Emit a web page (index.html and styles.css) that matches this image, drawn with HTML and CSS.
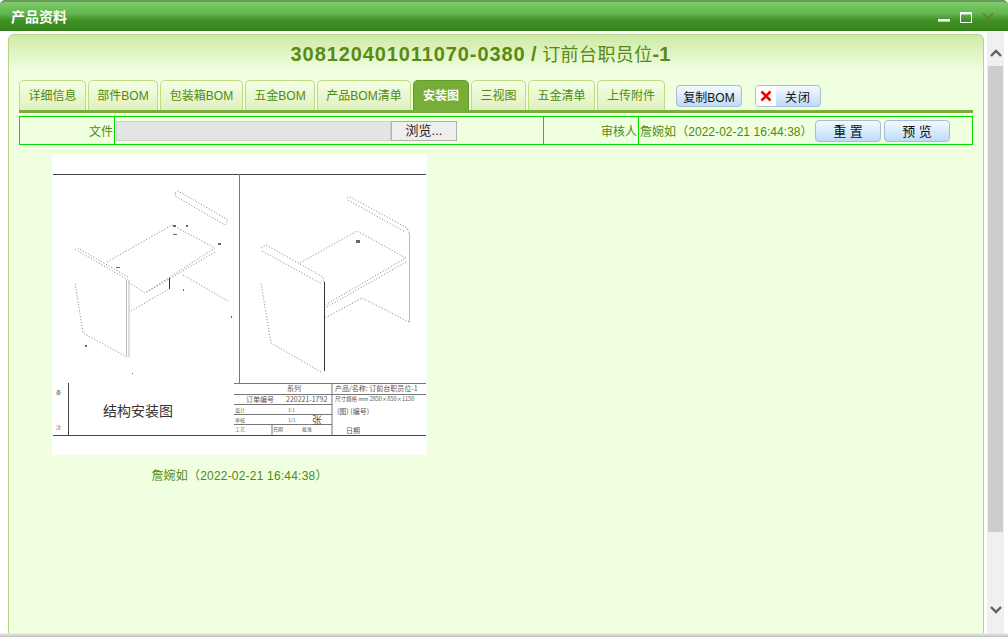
FILE: index.html
```html
<!DOCTYPE html>
<html lang="zh-CN">
<head>
    <meta charset="UTF-8">
    <title>产品资料</title>
    <link rel="stylesheet" href="styles.css">
</head>
<body>

<!-- Window title bar -->
<div class="titlebar">
    <span class="titlebar-text">产品资料</span>
    <div class="win-icons">
        <svg width="12" height="12" viewBox="0 0 12 12"><rect x="0" y="7" width="12" height="2.6" fill="#fff"/></svg>
        <svg width="12" height="12" viewBox="0 0 12 12"><rect x="0.5" y="0.5" width="11" height="10" fill="none" stroke="#fff"/><rect x="0" y="0" width="12" height="2.4" fill="#fff"/></svg>
        <svg width="12" height="12" viewBox="0 0 12 12"><path d="M1 1 L11 11 M11 1 L1 11" stroke="#5d8a1a" stroke-width="1.6" fill="none"/></svg>
    </div>
</div>

<div class="window-body">
    <div class="panel">
        <h1 class="product-title"><b>308120401011070-0380</b> <span class="slash">/</span> <span class="title-name">订前台职员位</span><b class="title-end">-1</b></h1>

        <!-- Tabs and the two buttons beside them -->
        <div class="tabs">
            <a class="tab t1">详细信息</a>
            <a class="tab t2">部件BOM</a>
            <a class="tab t3">包装箱BOM</a>
            <a class="tab t4">五金BOM</a>
            <a class="tab t5">产品BOM清单</a>
            <a class="tab t6 active">安装图</a>
            <a class="tab t7">三视图</a>
            <a class="tab t8">五金清单</a>
            <a class="tab t9">上传附件</a>
            <button class="btn btn-copy">复制BOM</button>
            <button class="btn btn-close">
                <span class="close-icon">
                    <svg width="12" height="12" viewBox="0 0 12 12"><path d="M1.5 1.5 L10.5 10.5 M10.5 1.5 L1.5 10.5" stroke="#f00000" stroke-width="2.6" fill="none"/></svg>
                </span>
                <span class="close-text">关闭</span>
            </button>
        </div>

        <!-- Upload row -->
        <div class="form-row">
            <div class="cell cell-label">文件</div>
            <div class="cell cell-file">
                <div class="file-input">
                    <div class="file-path"></div>
                    <div class="file-btn">浏览...</div>
                </div>
            </div>
            <div class="cell cell-label cell-audit">审核人</div>
            <div class="cell cell-info">
                <span class="info-text">詹婉如（2022-02-21 16:44:38）</span>
                <button class="btn btn-form btn-reset">重 置</button>
                <button class="btn btn-form">预 览</button>
            </div>
        </div>

        <!-- Uploaded drawing -->
        <div class="drawing-block">
            <svg class="drawing" width="375" height="300" viewBox="52 155 375 300">
                <rect x="52" y="155" width="375" height="300" fill="#fff"/>
                <g class="frame">
                    <path d="M53 174.5 H426 M53 435.5 H426"/>
                    <path class="frame-gray" d="M239.5 174 V383"/>
                    <path d="M68.5 383 V435"/>
                    <path class="frame-thin" d="M234 383.5 H426 M234 394.5 H426 M234 404.5 H332 M234 414.5 H332 M234 424.5 H332 M332 383 V435 M272 424 V435"/>
                </g>
                <!-- left view -->
                <g class="dots">
                    <path d="M175 193 L178 191 L228 220 L225 225 L175 196 Z"/>
                    <path d="M107 262 L172 225 L215 248 L145 293 L128 282"/>
                    <path d="M215 252 L147 292"/>
                    <path d="M75 250 L78 248 L128 277"/>
                    <path d="M127 357 L83 333 L75 283"/>
                    <path d="M131 311 L169 289"/>
                    <path d="M183 275 L228 301"/>
                    <path d="M78 251 L128 280"/>
                </g>
                <path class="solid-gray" d="M126.5 280 V357 M129 280 V357"/>
                <path class="solid-black" d="M169.5 278 V289"/>
                <g class="specks">
                    <rect x="231" y="316" width="1" height="2"/>
                    <rect x="85" y="345" width="2" height="2"/>
                    <rect x="132" y="373" width="1" height="1"/>
                    <rect x="173" y="225" width="3" height="2"/>
                    <rect x="186" y="225" width="2" height="2"/>
                    <rect x="173" y="234" width="4" height="1"/>
                    <rect x="218" y="243" width="3" height="2"/>
                    <rect x="116" y="267" width="4" height="1"/>
                    <rect x="183" y="289" width="1" height="2"/>
                </g>
                <!-- right view -->
                <g class="dots">
                    <path d="M347 198 L350 197 L407 228 L409 233"/>
                    <path d="M348 200 L405 232"/>
                    <path d="M300 263 L357 231 L406 258 L325 305"/>
                    <path d="M406 262 L325 308"/>
                    <path d="M409 322 L362 298 L325 318"/>
                    <path d="M261 248 L266 245 L323 277 L324 282"/>
                    <path d="M262 251 L322 284"/>
                    <path d="M321 372 L271 343 L261 283"/>
                </g>
                <path class="solid-gray" d="M409.5 233 V322"/>
                <path class="solid-black" d="M324.5 282 V371"/>
                <rect class="specks" x="356" y="240" width="4" height="3"/>
                <!-- title block -->
                <text class="tb-big" x="103" y="416">结构安装图</text>
                <text class="tb-small" x="56" y="394">备</text>
                <text class="tb-small" x="56" y="429">注</text>
                <text class="tb-mid" x="287" y="391">系列</text>
                <text class="tb-mid" x="335" y="391">产品/名称: 订前台职员位-1</text>
                <text class="tb-mid" x="246" y="402">订单编号</text>
                <text class="tb-mid" x="286" y="402">220221-1792</text>
                <text class="tb-tiny" x="335" y="401">尺寸规格 mm 2850×850×1150</text>
                <text class="tb-small" x="235" y="412">设计</text>
                <text class="tb-small" x="288" y="412">1:1</text>
                <text class="tb-mid" x="337" y="414">(图) (编号)</text>
                <text class="tb-small" x="235" y="422">审核</text>
                <text class="tb-small" x="288" y="422">1/1</text>
                <text class="tb-big-small" x="312" y="424">张</text>
                <text class="tb-small" x="235" y="431">工艺</text>
                <text class="tb-small" x="273" y="431">日期</text>
                <text class="tb-small" x="302" y="431">批准</text>
                <text class="tb-mid" x="346" y="433">日期</text>
            </svg>
            <div class="drawing-caption">詹婉如（2022-02-21 16:44:38）</div>
        </div>
    </div>

    <!-- Scrollbar -->
    <div class="scrollbar">
        <div class="scroll-arrow">
            <svg width="12" height="8" viewBox="0 0 12 8"><path d="M1 7 L6 2 L11 7" fill="none" stroke="#606060" stroke-width="2.4"/></svg>
        </div>
        <div class="scroll-thumb"></div>
        <div class="scroll-arrow scroll-arrow-down">
            <svg width="12" height="8" viewBox="0 0 12 8"><path d="M1 1 L6 6 L11 1" fill="none" stroke="#606060" stroke-width="2.4"/></svg>
        </div>
    </div>
</div>

<div class="window-bottom"></div>

</body>
</html>
```

FILE: styles.css
```css
html, body {
    margin: 0;
    padding: 0;
    height: 637px;
    overflow: hidden;
}

body {
    width: 1008px;
    display: flex;
    flex-direction: column;
    background-color: #fff;
    font-family: "Liberation Sans", "Noto Sans CJK SC", sans-serif;
    font-size: 12px;
    color: #4f8a10;
}

/* Title bar */
.titlebar {
    height: 28px;
    flex: none;
    display: flex;
    align-items: center;
    justify-content: space-between;
    padding: 0 14px 0 11px;
    border-top: 2px solid #6a9a5c;
    background: linear-gradient(#7ccb68 0%, #64b650 40%, #3f9226 65%, #36851c 100%);
    border-bottom: 1px solid #2f7a16;
    border-radius: 5px 5px 0 0;
}

.titlebar-text {
    color: #fff;
    font-size: 14px;
    font-weight: bold;
}

.win-icons {
    display: flex;
    gap: 10px;
    margin-top: 4px;
}

.win-icons svg {
    display: block;
}

/* Main area */
.window-body {
    flex: 1;
    display: flex;
    min-height: 0;
    padding: 3px 4px 0 8px;
    background: #fff;
}

.panel {
    flex: 1;
    min-width: 0;
    padding: 0 10px;
    border: 1px solid #b5d687;
    border-bottom: none;
    border-radius: 6px 6px 0 0;
    background: linear-gradient(#cdeaa6 0, #f0ffe0 36px);
}

.product-title {
    margin: 0;
    height: 45px;
    padding: 5px 31px 0 0;
    box-sizing: border-box;
    text-align: center;
    font-size: 20px;
    line-height: 26px;
    font-weight: normal;
    color: #5a8a14;
    white-space: nowrap;
}

.product-title b {
    font-family: "Liberation Sans", sans-serif;
    letter-spacing: 0.9px;
}

.product-title .title-end {
    letter-spacing: 0;
}

.slash {
    font-family: "Liberation Sans", sans-serif;
    font-weight: bold;
}

.title-name {
    font-family: "Noto Sans CJK SC", sans-serif;
    font-size: 18px;
    letter-spacing: 0.4px;
}

/* Tabs */
.tabs {
    display: flex;
    align-items: flex-end;
    height: 30px;
    border-bottom: 3px solid #76ae38;
    gap: 2px;
}

.tab {
    height: 30px;
    box-sizing: border-box;
    display: flex;
    align-items: center;
    justify-content: center;
    border: 1px solid #bfdc82;
    border-bottom: none;
    border-radius: 5px 5px 0 0;
    background: linear-gradient(#f4ffe4, #e0f0c0);
    white-space: nowrap;
    font-size: 12px;
    padding-bottom: 2px;
}

.t1 { width: 67px; }
.t2 { width: 70px; }
.t3 { width: 83px; }
.t4 { width: 70px; }
.t5 { width: 94px; }
.t6 { width: 56px; }
.t7 { width: 55px; }
.t8 { width: 67px; }
.t9 { width: 68px; }

.tab.active {
    background: #76ae38;
    border-color: #5f9e2a;
    color: #fff;
    font-weight: bold;
}

/* Buttons */
.btn {
    height: 22px;
    width: 66px;
    padding: 0;
    box-sizing: border-box;
    border: 1px solid #a8bcd2;
    border-radius: 4px;
    background: linear-gradient(#f4fafe, #bcdcfa);
    font-family: "Liberation Sans", "Noto Sans CJK SC", sans-serif;
    font-size: 12px;
    color: #111;
    display: inline-flex;
    align-items: center;
    justify-content: center;
}

.btn-copy {
    margin-left: 9px;
    margin-bottom: 3px;
}

.btn-close {
    margin-left: 11px;
    margin-bottom: 3px;
    justify-content: flex-start;
    overflow: hidden;
}

.close-icon {
    width: 20px;
    height: 20px;
    background: #fff;
    display: flex;
    align-items: center;
    justify-content: center;
    flex: none;
    margin-right: 9px;
}

.close-text {
    letter-spacing: 1px;
}

/* Upload row */
.form-row {
    display: flex;
    height: 29px;
    box-sizing: border-box;
    margin-top: 3px;
    border: 1px solid #00dc00;
}

.cell {
    display: flex;
    align-items: center;
    box-sizing: border-box;
    height: 100%;
    white-space: nowrap;
}

.cell-label {
    justify-content: flex-end;
    padding-right: 1px;
}

.form-row .cell-label {
    width: 95px;
    border-right: 1px solid #00dc00;
}

.cell-file {
    width: 429px;
    padding-left: 1px;
    border-right: 1px solid #00dc00;
}

.file-input {
    display: flex;
    width: 341px;
    height: 20px;
}

.file-path {
    flex: 1;
    background: #e4e4e4;
    border: 1px solid #cfcfcf;
}

.file-btn {
    width: 66px;
    box-sizing: border-box;
    border: 1px solid #b0b0b0;
    background: #eeeeee;
    color: #222;
    font-size: 13px;
    text-align: center;
    line-height: 18px;
}

.cell-info {
    flex: 1;
    padding-left: 1px;
}

.info-text {
    width: 175px;
    flex: none;
    letter-spacing: 0.05px;
}

.btn-form {
    font-size: 13px;
    margin-right: 3px;
}

/* Drawing */
.drawing-block {
    width: 375px;
    margin: 10px 0 0 33px;
}

.drawing {
    display: block;
}

.drawing-caption {
    margin-top: 12px;
    text-align: center;
    line-height: 18px;
    letter-spacing: 0.2px;
}

.frame path {
    fill: none;
    stroke: #444;
    stroke-width: 1;
}

.frame .frame-gray {
    stroke: #777;
}

.frame .frame-thin {
    stroke: #777;
}

.dots path {
    fill: none;
    stroke: #777;
    stroke-width: 0.8;
    stroke-dasharray: 1.2 1.8;
}

.solid-gray {
    fill: none;
    stroke: #bbb;
}

.solid-black {
    fill: none;
    stroke: #333;
}

.specks,
.specks rect {
    fill: #666;
}

.drawing text {
    font-family: "Noto Sans CJK SC", sans-serif;
    fill: #555;
}

.drawing .tb-big {
    font-size: 14px;
    fill: #333;
}

.tb-mid {
    font-size: 7px;
}

.tb-tiny {
    font-size: 5.5px;
}

.tb-small {
    font-size: 5px;
}

.tb-big-small {
    font-size: 10px;
}

/* Scrollbar */
.scrollbar {
    width: 17px;
    flex: none;
    margin: -2px 0 0 3px;
    display: flex;
    flex-direction: column;
    background: #f0f0f0;
}

.scroll-arrow {
    height: 34px;
    display: flex;
    align-items: center;
    justify-content: center;
    padding-top: 8px;
    box-sizing: border-box;
}

.scroll-thumb {
    height: 466px;
    margin: 0 1px;
    background: #cdcdcd;
}

.scroll-arrow-down {
    margin-top: auto;
    height: 46px;
    padding-top: 0;
    padding-bottom: 0;
    margin-bottom: 0;
}

.window-bottom {
    height: 4px;
    flex: none;
    background: linear-gradient(#f0f0f0, #c0c0c0);
}
```
